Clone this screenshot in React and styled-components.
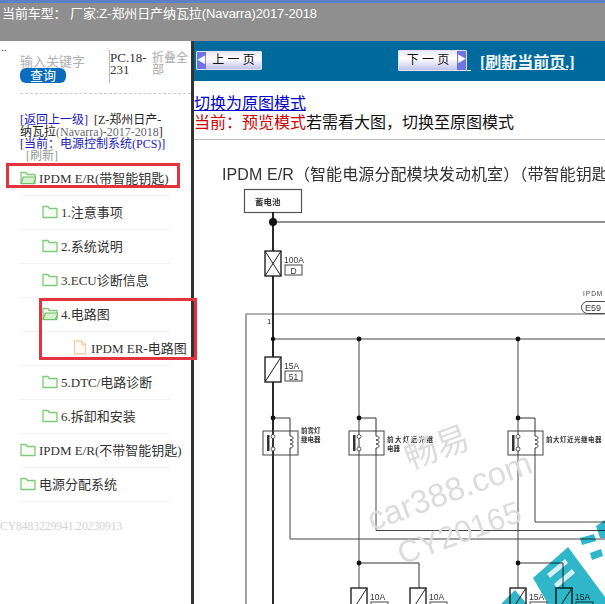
import React from 'react';
import styled, { createGlobalStyle } from 'styled-components';

const serif = '"Liberation Serif", "Noto Sans CJK SC", serif';
const sans = '"Liberation Sans", "Noto Sans CJK SC", sans-serif';

const GlobalStyle = createGlobalStyle`
  html, body {
    margin: 0;
    padding: 0;
    background: #fff;
  }
`;

const Page = styled.div`
  position: relative;
  width: 605px;
  height: 604px;
  overflow: hidden;
  background: #fff;
  font-family: ${serif};
`;

const TopBar = styled.div`
  box-sizing: border-box;
  height: 41px;
  padding: 3px 0 0 2px;
  border-top: 3px solid #5f80c6;
  background: #8f8f8f;
  color: #fff;
  font-family: ${sans};
  font-size: 13px;
  line-height: 16px;
  letter-spacing: -0.1px;
  white-space: pre;
`;

const Body = styled.div`
  display: flex;
  height: 563px;
`;

const Sidebar = styled.div`
  position: relative;
  box-sizing: border-box;
  width: 194px;
  flex-shrink: 0;
  border-right: 3px solid #333;
`;

const Dots = styled.div`
  position: absolute;
  top: 0;
  left: 1px;
  font-size: 11px;
  line-height: 12px;
  color: #333;
`;

const SearchRow = styled.div`
  box-sizing: border-box;
  display: flex;
  height: 53px;
  margin-left: 20px;
  padding-top: 9px;
  border-bottom: 1px dashed #ccc;
`;

const SearchBox = styled.div`
  width: 89px;
  padding-top: 4px;
`;

const Placeholder = styled.div`
  font-family: ${sans};
  font-size: 13px;
  line-height: 15px;
  color: #b0b0b0;
`;

const SearchButton = styled.div`
  width: 46px;
  height: 15px;
  margin-top: -1px;
  border-radius: 6px;
  background: #0a6cbe;
  color: #fff;
  font-family: ${sans};
  font-size: 13px;
  line-height: 15px;
  text-align: center;
`;

const PageRange = styled.div`
  box-sizing: border-box;
  width: 43px;
  height: 33px;
  padding-top: 2px;
  border-left: 1px solid #bbb;
  font-size: 13px;
  line-height: 12px;
  color: #333;
`;

const Collapse = styled.div`
  width: 38px;
  padding-top: 2px;
  font-family: ${sans};
  font-size: 12px;
  line-height: 12px;
  color: #aaa;
`;

const Crumbs = styled.div`
  box-sizing: border-box;
  height: 68px;
  padding: 20px 0 0 20px;
  font-family: ${serif};
  font-size: 12px;
  line-height: 12px;
  white-space: nowrap;
`;

const CrumbLine = styled.div`
  color: ${(p) => p.$color || '#222'};
`;

const Blue = styled.span`
  color: #1a1ab8;
`;

const Faint = styled.span`
  color: #6a6a6a;
`;

const Refresh = styled.div`
  margin: 0 0 0 6px;
  color: #999;
`;

const Row = styled.div`
  box-sizing: border-box;
  display: flex;
  align-items: center;
  width: 150px;
  height: 34px;
  margin-left: 20px;
  padding-left: ${(p) => [0, 22, 53][p.$level]}px;
  padding-bottom: 3px;
  border-bottom: 1px solid #f3f3f3;
  font-size: 13px;
  color: #333;
  white-space: nowrap;
`;

const RowIcon = styled.svg`
  flex-shrink: 0;
  margin-right: ${(p) => (p.$file ? 4 : 3)}px;
`;

const Serial = styled.div`
  padding-top: 17px;
  font-size: 11.5px;
  line-height: 14px;
  color: #d2d2d2;
  white-space: nowrap;
`;

const Main = styled.div`
  flex: 1;
  min-width: 0;
  display: flex;
  flex-direction: column;
  overflow: hidden;
`;

const NavBar = styled.div`
  box-sizing: border-box;
  display: flex;
  align-items: center;
  height: 40px;
  padding: 0 0 1px 2px;
  background: #006a9c;
`;

const PageButton = styled.div`
  box-sizing: border-box;
  display: flex;
  flex-direction: ${(p) => (p.$next ? 'row-reverse' : 'row')};
  width: ${(p) => (p.$next ? 69 : 66)}px;
  height: ${(p) => (p.$next ? 21 : 19)}px;
  margin-left: ${(p) => (p.$next ? 136 : 0)}px;
  border: 1px solid #dfe3f7;
  border-radius: 1px;
  background: linear-gradient(#e9eafb, #ffffff 40%, #bfc2ec);
`;

const ArrowTab = styled.div`
  width: 9px;
  background: #6f74e2;
  color: #fff;
  font-family: ${sans};
  font-size: 9px;
  line-height: 17px;
  text-align: center;
`;

const ButtonLabel = styled.div`
  flex: 1;
  font-family: ${sans};
  font-size: 12px;
  line-height: ${(p) => (p.$next ? 18 : 17)}px;
  color: #111;
  text-align: center;
  white-space: pre;
`;

const Tick = styled.div`
  width: 4px;
  height: 1px;
  margin-top: 19px;
  background: #fff;
`;

const RefreshLink = styled.a`
  margin-left: 9px;
  font-size: 16px;
  font-weight: 700;
  color: #f2f6fa;
  text-decoration: underline;
  white-space: nowrap;
`;

const ModeBlock = styled.div`
  box-sizing: border-box;
  height: 59px;
  padding-top: 13px;
  font-family: ${sans};
  font-size: 16px;
  line-height: 19px;
  color: #111;
  border-bottom: 1px solid #bbb;
  white-space: nowrap;
`;

const ModeLink = styled.a`
  display: block;
  color: #0000c8;
  text-decoration: underline;
`;

const Red = styled.span`
  color: #d00000;
`;

const Schematic = styled.svg`
  display: block;
  flex-shrink: 0;
  filter: blur(0.35px);
  font-family: ${sans};
`;

const TealMark = styled.g`
  mix-blend-mode: multiply;
`;

const RedBox = styled.div`
  position: absolute;
  box-sizing: border-box;
  top: ${(p) => p.$top}px;
  left: ${(p) => p.$left}px;
  width: ${(p) => p.$width}px;
  height: ${(p) => p.$height}px;
  border: 3px solid #e2333f;
`;

const Folder = ({ open }) => (
  <RowIcon width="16" height="15" viewBox="0 0 16 15">
    <path
      d="M1 13.5V2.5h5l1.5 2H15v9z"
      fill="#f6fcf2"
      stroke="#80c97c"
      strokeWidth="1.3"
      strokeLinejoin="round"
    />
    {open && (
      <path d="M1 13.5l2.5-6.5H16l-2.5 6.5z" fill="#d7f0cd" stroke="#6fbe68" strokeWidth="1.2" strokeLinejoin="round" />
    )}
  </RowIcon>
);

const FileIcon = () => (
  <RowIcon $file width="14" height="15" viewBox="0 0 14 15">
    <path d="M1.5 1h7l4 4v9h-11z" fill="#fffaf4" stroke="#f0cfa8" strokeWidth="1.3" strokeLinejoin="round" />
    <path d="M8.5 1v4h4" fill="none" stroke="#f0cfa8" strokeWidth="1" />
  </RowIcon>
);

const treeRows = [
  { level: 0, open: true, label: 'IPDM E/R(带智能钥匙)' },
  { level: 1, label: '1.注意事项' },
  { level: 1, label: '2.系统说明' },
  { level: 1, label: '3.ECU诊断信息' },
  { level: 1, open: true, label: '4.电路图' },
  { level: 2, file: true, label: 'IPDM ER-电路图' },
  { level: 1, label: '5.DTC/电路诊断' },
  { level: 1, label: '6.拆卸和安装' },
  { level: 0, label: 'IPDM E/R(不带智能钥匙)' },
  { level: 0, label: '电源分配系统' },
];

const Fuse = ({ x, y, h = 25, cross, label, tag, w = 16 }) => (
  <g>
    <rect x={x} y={y} width={w} height={h} fill="#fff" stroke="#222" strokeWidth="1.4" />
    <line x1={x} y1={y + h} x2={x + w} y2={y} stroke="#222" strokeWidth="1" />
    {cross && <line x1={x} y1={y} x2={x + w} y2={y + h} stroke="#222" strokeWidth="1" />}
    <text x={x + 19} y={y + 12} fontSize="8.5" fill="#333">{label}</text>
    <rect x={x + 20} y={y + 14} width="17" height="10" fill="#fff" stroke="#444" strokeWidth="1" />
    <text x={x + 28.5} y={y + 22.5} fontSize="8.5" fill="#333" textAnchor="middle">{tag}</text>
  </g>
);

const Relay = ({ x, wire, children }) => (
  <g>
    <path d={`M${x} 418H${x + 17}V431`} fill="none" stroke="#333" strokeWidth="1" />
    <circle cx={x} cy="418" r="2.4" fill="#111" />
    <rect x={x - 10} y="431" width="35" height="24" fill="#fff" stroke="#444" strokeWidth="1" />
    <rect x={x - 6} y="435" width="2.5" height="16" fill="#333" />
    <line x1={x} y1="431" x2={x} y2="455" stroke="#333" strokeWidth={x === 273 ? 2 : 1} />
    <circle cx={x} cy="436.5" r="2" fill="#fff" stroke="#333" strokeWidth="0.8" />
    <circle cx={x} cy="449" r="2" fill="#fff" stroke="#333" strokeWidth="0.8" />
    <path
      d={`M${x + 17} 431V436c4 0 4 4 0 4c4 0 4 4 0 4c4 0 4 4 0 4V455`}
      fill="none"
      stroke="#333"
      strokeWidth="1"
    />
    <path d={wire} fill="none" stroke="#444" strokeWidth="1" />
    {children}
  </g>
);

const Diagram = () => (
  <Schematic width="411" height="464" viewBox="194 140 411 464">
    <text x="222" y="180" fontSize="16" fill="#333" letterSpacing="0.1">IPDM E/R（智能电源分配模块发动机室）（带智能钥匙）</text>

    <rect x="244.5" y="189.5" width="57" height="23" fill="#fff" stroke="#555" strokeWidth="1.2" />
    <text x="255" y="205" fontSize="8.5" fontWeight="700" fill="#333">蓄电池</text>

    <path d="M246 604V314H605" fill="none" stroke="#666" strokeWidth="1.2" />
    <line x1="273" y1="212" x2="273" y2="604" stroke="#111" strokeWidth="1.8" />
    <line x1="273" y1="222" x2="605" y2="222" stroke="#222" strokeWidth="1.2" />
    <circle cx="273" cy="222" r="4" fill="#111" />
    <Fuse x={265} y={251} cross label="100A" tag="D" />

    <text x="583" y="296" fontSize="6.5" fill="#444" letterSpacing="1">IPDM E/R</text>
    <rect x="581.5" y="301.5" width="28" height="12" rx="6" fill="#fff" stroke="#444" strokeWidth="1" />
    <text x="585" y="311" fontSize="9" fill="#333">E59</text>
    <text x="267" y="324" fontSize="8" fill="#333">1</text>

    <line x1="273" y1="339" x2="605" y2="339" stroke="#444" strokeWidth="1" />
    <line x1="359" y1="339" x2="359" y2="604" stroke="#444" strokeWidth="1" />
    <line x1="518" y1="339" x2="518" y2="604" stroke="#444" strokeWidth="1" />
    <circle cx="273" cy="339" r="2.2" fill="#111" />
    <circle cx="359" cy="339" r="2.4" fill="#111" />
    <circle cx="518" cy="339" r="2.4" fill="#111" />
    <Fuse x={265} y={357} label="15A" tag="51" />

    <Relay x={273} wire="M290 455V539H605">
      <text x="301" y="433" fontSize="6.5" fontWeight="700" fill="#333">前雾灯</text>
      <text x="301" y="442" fontSize="6.5" fontWeight="700" fill="#333">继电器</text>
    </Relay>
    <Relay x={359} wire="M376 455V530.5H605">
      <text x="387" y="442" fontSize="6.5" fontWeight="700" fill="#333" letterSpacing="1.4">前大灯远光继</text>
      <text x="387" y="451" fontSize="6.5" fontWeight="700" fill="#333">电器</text>
    </Relay>
    <Relay x={518} wire="M535 455V522H605">
      <text x="546" y="442" fontSize="6.5" fontWeight="700" fill="#333" letterSpacing="0.5">前大灯近光继电器</text>
    </Relay>

    <g fill="#dcdcdc" transform="rotate(-20 447 490)">
      <text x="452" y="458" fontSize="33" textAnchor="middle">畅易</text>
      <text x="449" y="503" fontSize="33" textAnchor="middle">car388.com</text>
      <text x="444" y="545" fontSize="31" textAnchor="middle">CY20165</text>
    </g>

    <path d="M359 563H419V588" fill="none" stroke="#333" strokeWidth="1" />
    <path d="M518 563H563V588" fill="none" stroke="#333" strokeWidth="1" />
    <circle cx="359" cy="563" r="2.4" fill="#111" />
    <circle cx="518" cy="563" r="2.4" fill="#111" />

    <Fuse x={351} y={588} label="10A" tag="50" />
    <Fuse x={410} y={588} label="10A" tag="49" />
    <Fuse x={510} y={588} label="15A" tag="48" />
    <Fuse x={556} y={588} label="15A" tag="47" />

    <TealMark>
      <g fill="#2fb6c9">
        <path d="M533 578L568 547L605 597V604H548z" />
        <path d="M580 538l14-4l2 7l-14 4zM590 553l11-4l2 7l-11 4zM596 526l9-6v18h-5zM501 604l14-14l12 14z" />
      </g>
      <g fill="#d5f0f4">
        <path d="M547 574l18-15l3 4l-18 15zM554 584l18-15l3 4l-18 15z" />
      </g>
    </TealMark>
  </Schematic>
);

const App = () => (
  <Page>
    <GlobalStyle />
    <TopBar>当前车型： 厂家:Z-郑州日产纳瓦拉(Navarra)2017-2018</TopBar>
    <Body>
      <Sidebar>
        <Dots>..</Dots>
        <SearchRow>
          <SearchBox>
            <Placeholder>输入关键字</Placeholder>
            <SearchButton>查询</SearchButton>
          </SearchBox>
          <PageRange>
            PC.18-
            <br />
            231
          </PageRange>
          <Collapse>折叠全部</Collapse>
        </SearchRow>
        <Crumbs>
          <CrumbLine>
            <Blue>[返回上一级]</Blue>&nbsp;&nbsp;[Z-郑州日产-
          </CrumbLine>
          <CrumbLine>
            纳瓦拉<Faint>(Navarra)-2017-2018</Faint>]
          </CrumbLine>
          <CrumbLine $color="#1a1ab8">[当前：电源控制系统(PCS)]</CrumbLine>
          <Refresh>[刷新]</Refresh>
        </Crumbs>
        {treeRows.map((row) => (
          <Row key={row.label} $level={row.level}>
            {row.file ? <FileIcon /> : <Folder open={row.open} />}
            {row.label}
          </Row>
        ))}
        <Serial>CY8483229941.20230913</Serial>
      </Sidebar>
      <Main>
        <NavBar>
          <PageButton>
            <ArrowTab>◀</ArrowTab>
            <ButtonLabel>上 一 页</ButtonLabel>
          </PageButton>
          <PageButton $next>
            <ArrowTab>▶</ArrowTab>
            <ButtonLabel $next>下 一 页</ButtonLabel>
          </PageButton>
          <Tick />
          <RefreshLink>[刷新当前页.]</RefreshLink>
        </NavBar>
        <ModeBlock>
          <ModeLink>切换为原图模式</ModeLink>
          <Red>当前：预览模式</Red>若需看大图，切换至原图模式
        </ModeBlock>
        <Diagram />
      </Main>
    </Body>
    <RedBox $top={163} $left={6} $width={174} $height={25} />
    <RedBox $top={298} $left={39} $width={158} $height={62} />
  </Page>
);

export default App;
